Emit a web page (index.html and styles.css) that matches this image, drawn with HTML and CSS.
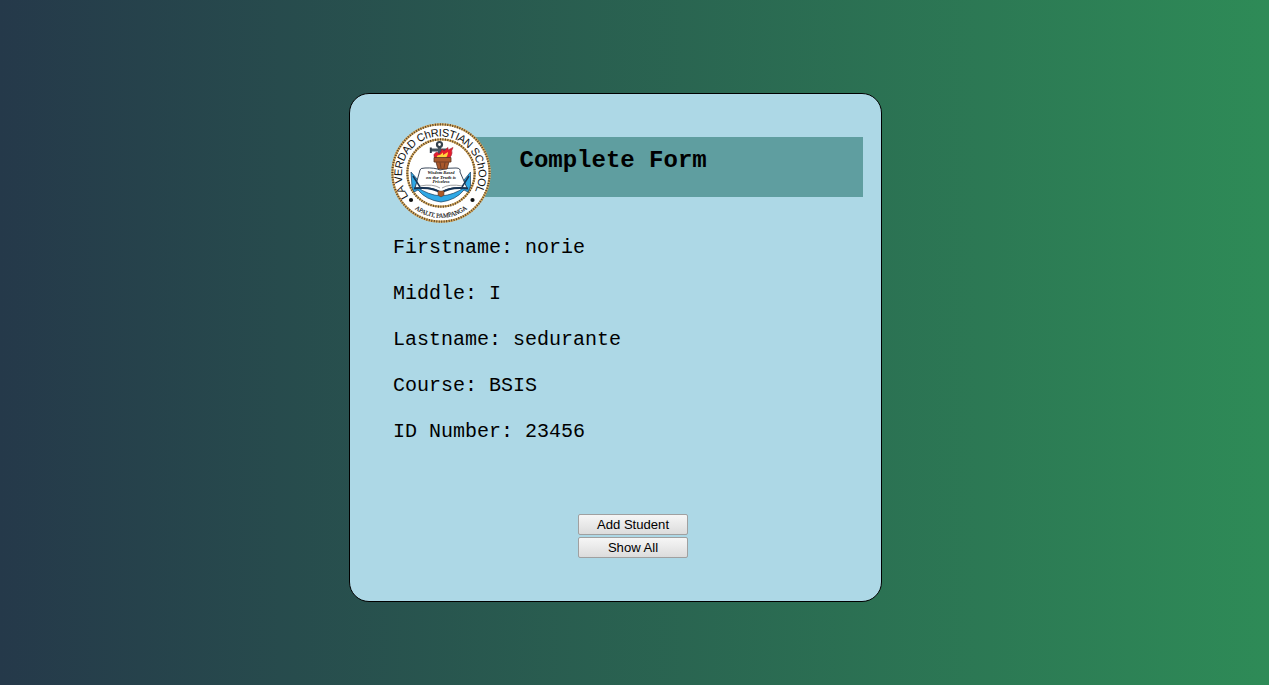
FILE: index.html
```html
<!DOCTYPE html>
<html lang="en">
<head>
<meta charset="utf-8">
<title>Complete Form</title>
<link rel="stylesheet" href="styles.css">
</head>
<body>
<main class="card">
  <header class="head">
    <svg class="seal" viewBox="0 0 100 100" aria-label="La Verdad Christian School">
      <defs>
        <path id="arc-top" d="M17.500 73.500 A38.400 38.400 0 1 1 82 71.800"/>
        <path id="arc-bottom" d="M15 77 A43.5 43.5 0 0 0 85 77"/>
      </defs>
      <circle cx="50" cy="50" r="49.5" fill="#fff"/>
      <circle cx="50" cy="50" r="48.6" fill="none" stroke="#d6aa5c" stroke-width="2.2"/>
      <circle cx="50" cy="50" r="48.6" fill="none" stroke="#57402a" stroke-width="2.2" stroke-dasharray="1 1.5"/>
      <circle cx="50" cy="50" r="33.7" fill="none" stroke="#d6aa5c" stroke-width="2.2"/>
      <circle cx="50" cy="50" r="33.7" fill="none" stroke="#57402a" stroke-width="2.2" stroke-dasharray="1 1.5"/>
      <text class="seal-name" textLength="160"><textPath href="#arc-top">LA VERDAD ChRISTIAN SChOOL</textPath></text>
      <text class="seal-place"><textPath href="#arc-bottom" startOffset="50%" text-anchor="middle" textLength="56">APALIT, PAMPANGA</textPath></text>
      <circle cx="20" cy="77" r="2.1" fill="#111"/>
      <circle cx="81.500" cy="77" r="2.100" fill="#111"/>
      <path d="M20 49 L27 57 L26 64 Q37 72 50 73 Q63 72 74 64 L73 57 L79.500 49 V63 L77 69 L73 67 Q65 77 50 79 Q35 77 27 67 L23 69 L21 64Z" fill="#2fa8e6" stroke="#173d5f" stroke-width=".7"/>
      <path d="M29 47 Q29 45 34 45 Q44 44.500 49 47 Q57 44.500 65 45 Q70 45 69 49 L76 65 Q60 63 50 69 Q40 63 24 65Z" fill="#fff" stroke="#27364a" stroke-width=".9"/>
      <path d="M23 65.500 Q41 63.500 50 70 Q59 63.500 77 65.500" fill="none" stroke="#173454" stroke-width="2"/>
      <path d="M29 63 Q42 60.500 49 65 M51 65 Q58 60.500 72 63" fill="none" stroke="#777" stroke-width=".7"/>
      <path d="M22 53 L29 64 M78 53 L71 64" fill="none" stroke="#173454" stroke-width="1.500"/>
      <path d="M47 68 H53 V72 L50 74 L47 72Z" fill="#ae5928" stroke="#593521" stroke-width=".5"/>
      <path d="M40 27 H57 M48.500 23 V34" stroke="#46545e" stroke-width="3.200"/>
      <circle cx="48.500" cy="21.500" r="2.500" fill="#fff" stroke="#35434d" stroke-width="2.200"/>
      <path d="M39.800 24.500 V30" stroke="#303c47" stroke-width="2"/>
      <path d="M44 35 Q41 31 46 29 L48 31 Q50 29 51 26 L53 28 L57 24.500 L57 27 L62 24.500 Q60 28 61 30 Q60 36 54 36Z" fill="#e51d2d" stroke="#9d182c" stroke-width=".6"/>
      <path d="M46 35 Q45 32 49 32 L52 29.500 V32 L57 29 Q57 34 53 36Z" fill="#ffd53d"/>
      <path d="M43 34.500 H60 V39 H58 L56 46 H47 L45 39 H43Z" fill="#a9582b" stroke="#5c3220" stroke-width=".8"/>
      <path d="M45 39 H58 M49 39.500 L50 45 M54 39.500 L53 45" stroke="#5c3220" stroke-width=".7"/>
      <g class="seal-motto">
        <text x="50" y="51" textLength="27" lengthAdjust="spacingAndGlyphs">Wisdom Based</text>
        <text x="50" y="55.500" textLength="30" lengthAdjust="spacingAndGlyphs">on the Truth is</text>
        <text x="50" y="60" textLength="17" lengthAdjust="spacingAndGlyphs">Priceless</text>
      </g>
    </svg>
    <h1 class="title">Complete Form</h1>
  </header>
  <section class="details">
    <p>Firstname: norie</p>
    <p>Middle: I</p>
    <p>Lastname: sedurante</p>
    <p>Course: BSIS</p>
    <p>ID Number: 23456</p>
  </section>
  <div class="actions">
    <button class="btn">Add Student</button>
    <button class="btn">Show All</button>
  </div>
</main>
</body>
</html>
```
FILE: styles.css
```css
* { box-sizing: border-box; }
body {
  margin: 0;
  height: 685px;
  overflow: hidden;
  padding: 93px 0 0 349px;
  background: linear-gradient(to right, #25394a, #2e8b57);
  font-family: "Courier New", "Liberation Mono", monospace;
  color: #000;
}
.card {
  width: 533px;
  height: 509px;
  padding: 43px 18px 0 43px;
  background: lightblue;
  border: 1px solid #000;
  border-radius: 20px;
}
.head {
  display: flex;
  height: 60px;
  margin-left: 50px;
  background: cadetblue;
}
.seal {
  flex: none;
  width: 100px;
  height: 100px;
  margin: -14px 0 0 -52px;
}
.seal-name {
  font: 11px "Liberation Sans", Arial, sans-serif;
  fill: #111;
}
.seal-place {
  font: 6.3px "Liberation Serif", serif;
  fill: #111;
  stroke: #111;
  stroke-width: .15px;
}
.seal-motto {
  font: italic bold 3.8px "Liberation Serif", serif;
  text-anchor: middle;
  fill: #111;
}
.title {
  margin: 10px 0 0 28.5px;
  font-size: 24px;
  line-height: 27px;
}
.details {
  margin-top: 39px;
  font-size: 20px;
  line-height: 23px;
}
.details p { margin: 0 0 23px; }
.actions {
  display: flex;
  flex-direction: column;
  gap: 2px;
  width: 110px;
  margin: 71px 0 0 185px;
}
.btn {
  height: 21px;
  padding: 0;
  border: 1px solid #a0a0a0;
  border-radius: 2px;
  background: linear-gradient(#f6f6f6, #dcdcdc);
  font: 13.1px "Liberation Sans", Arial, sans-serif;
  color: #000;
}
```
